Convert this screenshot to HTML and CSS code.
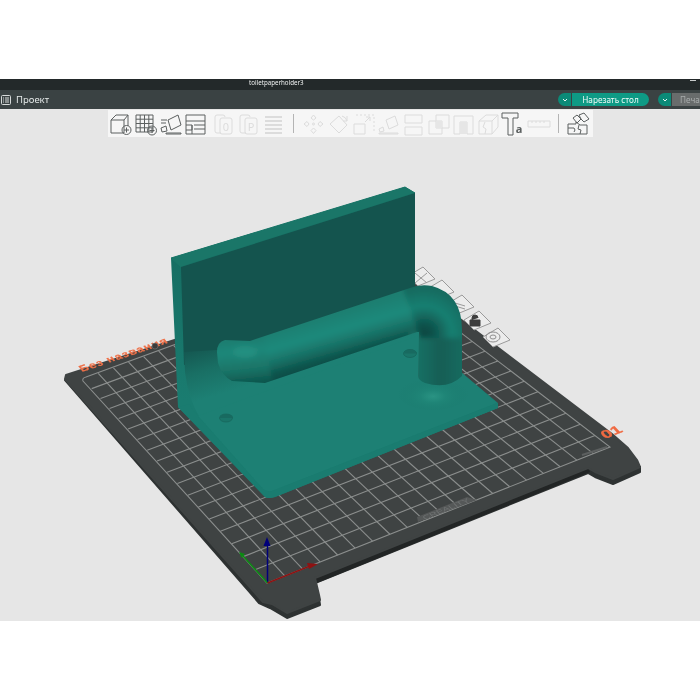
FILE: index.html
```html
<!DOCTYPE html>
<html lang="ru">
<head>
<meta charset="utf-8">
<title>toiletpaperholder3</title>
<link rel="stylesheet" href="styles.css">
</head>
<body>
<div class="page">
  <header class="titlebar"><span class="doc-title">toiletpaperholder3</span><span class="win-min"></span></header>
  <nav class="menubar">
    <svg class="menu-icon" viewBox="0 0 10 10"><rect x=".5" y=".5" width="9" height="9" rx="1"/><path d="M2 3h1M2 5h1M2 7h1M4 3h4M4 5h4M4 7h4"/></svg>
    <span class="menu-label">Проект</span>
    <div class="menu-actions">
      <div class="action slice"><span class="drop"><svg viewBox="0 0 6 4"><path d="M1 1l2 2 2-2"/></svg></span><span class="action-main">Нарезать стол</span></div>
      <div class="action print"><span class="drop"><svg viewBox="0 0 6 4"><path d="M1 1l2 2 2-2"/></svg></span><span class="action-main">Печать</span></div>
    </div>
  </nav>
  <main class="viewport">
    <svg class="scene" viewBox="0 109 700 512">
      <defs>
        <linearGradient id="gSide" gradientUnits="userSpaceOnUse" x1="0" y1="260" x2="0" y2="400"><stop offset="0" stop-color="#166e63"/><stop offset="1" stop-color="#1a7c70"/></linearGradient>
        <linearGradient id="gFillet" gradientUnits="userSpaceOnUse" x1="192" y1="345" x2="208" y2="398"><stop offset="0" stop-color="#14544e"/><stop offset=".5" stop-color="#196f64"/><stop offset="1" stop-color="#1d8074"/></linearGradient>
        <linearGradient id="gTube" gradientUnits="userSpaceOnUse" x1="324" y1="316" x2="336" y2="358"><stop offset="0" stop-color="#1a7e70"/><stop offset=".42" stop-color="#1f8a7c"/><stop offset=".75" stop-color="#176e63"/><stop offset="1" stop-color="#0b5048"/></linearGradient>
        <linearGradient id="gLeg" gradientUnits="userSpaceOnUse" x1="418" y1="0" x2="462" y2="0"><stop offset="0" stop-color="#1a7064"/><stop offset=".5" stop-color="#125e55"/><stop offset="1" stop-color="#136a5f"/></linearGradient>
        <radialGradient id="gElbow" gradientUnits="userSpaceOnUse" cx="424" cy="334" r="46"><stop offset="0" stop-color="#0a4640"/><stop offset=".22" stop-color="#0e534c"/><stop offset=".6" stop-color="#1a8072"/><stop offset="1" stop-color="#136a5f"/></radialGradient>
        <radialGradient id="gMound" cx=".5" cy=".62" r=".5"><stop offset="0" stop-color="#2a9383"/><stop offset=".35" stop-color="#1f8577"/><stop offset="1" stop-color="#1a7a6e" stop-opacity="0"/></radialGradient>
        <linearGradient id="gCap" gradientUnits="userSpaceOnUse" x1="235" y1="338" x2="240" y2="385"><stop offset="0" stop-color="#1a7b6e"/><stop offset=".3" stop-color="#20887a"/><stop offset=".7" stop-color="#197366"/><stop offset="1" stop-color="#0c544c"/></linearGradient>
        <clipPath id="tubeClip"><path d="M250 341L410 288Q420 284 432 286Q462 294 462 330L462 376Q448 390 425 383Q418 380 418 376L419 332L417 332L265 383L232 381Q222 376 218 363L217 352Q217 342 225 340Z"/></clipPath>
        <filter id="soft" filterUnits="userSpaceOnUse" x="190" y="250" width="310" height="170"><feGaussianBlur stdDeviation="2.500"/></filter>
      </defs>

      <path class="bed-side" d="M65 380L259 603L270 608L287 618L320 605L319 598L315 583L588 473L595 477L613 484L640 472L640 467L300 400Z"/>
      <path class="bed-slot" d="M315 578L588 468L590 472L317 583Z"/>
      <path class="bed-top" d="M66 375L394 269L612 434L628 448L637 460L640 467L613 479L595 472L588 468L315 578L319 595L320 600L287 613L272 604L263 602L65 379Z"/>
      <g id="grid" class="grid"></g>
      <path class="grid-edge" d="M86 377L379 270L610 447L267 583L83 381Q82 378 86 377Z"/>
      <path class="brand-tab" d="M417 517L467 497L477 500L418 522Z"/>
      <text class="brand" transform="matrix(.93 -.38 .5 .5 425 520)">CREALITY</text>
      <path class="corner-bar" d="M582 455L607 447"/>

      <text class="plate-name" transform="matrix(.95 -.32 .52 .66 82 372)">Без названия</text>
      <circle class="plate-dot" cx="155" cy="346" r="3"/>
      <text class="plate-no" transform="matrix(1.05 -.42 .55 .6 605 439)">01</text>

      <g class="badges">
        <path d="M408 276L423 267L435 279L418 286Z"/><path d="M415 273L427 283M427 273L415 283"/>
        <path d="M427 289L442 280L454 292L437 299Z"/>
        <path d="M447 304L462 295L474 307L457 314Z"/><path d="M455 303L465 306M455 306L465 309"/>
        <path d="M464 320L479 311L491 323L474 330Z"/>
        <path d="M483 337L498 328L510 340L493 347Z"/>
      </g>
      <path class="lock" d="M470 320h10v6h-10zM472 320v-2a3 3 0 0 1 6 0"/>
      <ellipse class="nut" cx="493" cy="337" rx="7" ry="5"/><ellipse class="nut" cx="493" cy="337" rx="3" ry="2"/>

      <path fill="url(#gSide)" class="m-round" d="M171 258L405 187L415 193L415 287L462 373L498 403L498 408L275 497Q268 499 265 497L178 407Z"/>
      <path class="m-top m-round" d="M171 258L405 187L415 193L181 267Z"/>
      <path class="m-wall" d="M181 267L415 193L415 300L184 365Z"/>
      <path fill="url(#gFillet)" d="M184 352L250 348L415 292L420 340L200 418Q188 398 185 372Z"/>
      <path class="m-base" d="M198 416L420 335L462 373L497 403L272 491Q267 492 263 489Z"/>
      <path class="m-edge" d="M263 489Q267 492 272 491L497 403L498 408L275 497Q268 499 265 497L178 407L190 404Q192 410 198 416Z"/>
      <ellipse fill="url(#gMound)" cx="433" cy="392" rx="36" ry="18"/>
      <ellipse class="m-dot" cx="226" cy="418" rx="6.500" ry="4"/>
      <path class="m-dot-hi" d="M220 418a6.500 4 0 0 1 13 0"/>
      <ellipse class="m-dot" cx="410" cy="353.500" rx="6.500" ry="4"/>
      <path class="m-dot-hi" d="M404 353.500a6.500 4 0 0 1 13 0"/>

      <g clip-path="url(#tubeClip)">
        <g filter="url(#soft)">
          <path fill="url(#gTube)" d="M250 325L412 270L425 345L265 400Z"/>
          <path fill="url(#gLeg)" d="M410 332L475 332L475 400L410 400Z"/>
          <path fill="url(#gElbow)" d="M400 280L424 270L480 280L480 338L420 338Z"/>
          <path fill="url(#gCap)" d="M262 325L205 325L205 395L275 395L268 360Z"/>
          <ellipse class="cap-hi" cx="245" cy="352" rx="12" ry="6"/>
        </g>
      </g>

      <g class="axes">
        <path class="ax-b" d="M267.500 583V544"/><path class="ax-bh" d="M267 537L270.500 546H263.500Z"/>
        <path class="ax-g" d="M267.500 583L243 556"/><path class="ax-gh" d="M239 552L245 554L241.500 558Z"/>
        <path class="ax-r" d="M267.500 583L310 566"/><path class="ax-rh" d="M318 564L309 569L307 563Z"/>
      </g>
    </svg>

    <div class="toolbar">
      <svg class="ti on" viewBox="0 0 25 24"><path d="M3 8h13v13H3zM3 8l5-5h12v11M16 8l4-5"/><circle cx="18.500" cy="18" r="4.500"/><path d="M16 18h5M18.500 15.500v5"/></svg>
      <svg class="ti on" viewBox="0 0 25 24"><path d="M3 3h17v17H3zM3 7.200h17M3 11.500h17M3 15.800h17M7.200 3v17M11.500 3v17M15.800 3v17"/><circle cx="19" cy="18.500" r="4.500"/><path d="M16.500 18.500h5M19 16v5"/></svg>
      <svg class="ti on" viewBox="0 0 25 24"><path d="M10 8l10-5 3 10-10 5zM3 8h6M3 11h5M8 21h15v1H8zM3 16l5-2 1 5-5 1z"/></svg>
      <svg class="ti on" viewBox="0 0 25 24"><path d="M3 3h19v19H3zM3 9h19M3 13h6v5H3M11 13h11M11 17h11M9 13v9"/></svg>
      <svg class="ti off g2" viewBox="0 0 25 24"><path d="M10 21H6q-2 0-2-2V5q0-2 2-2h6q2 0 2 2"/><rect x="9" y="6" width="12" height="16" rx="2"/><text class="ti-t" x="15" y="19">0</text></svg>
      <svg class="ti off" viewBox="0 0 25 24"><path d="M10 21H6q-2 0-2-2V5q0-2 2-2h6q2 0 2 2"/><rect x="9" y="6" width="12" height="16" rx="2"/><text class="ti-t" x="15" y="19">P</text></svg>
      <svg class="ti off fat" viewBox="0 0 25 24"><path d="M4 5h17M4 9h17M4 13h17M4 17h17M4 21h17"/></svg>
      <span class="sep"></span>
      <svg class="ti off" viewBox="0 0 25 24"><path d="M12.500 3l2.500 3-2.500 2-2.500-2zM12.500 16l2.500 2.500-2.500 3-2.500-3zM3 12l3-2.500 2 2.500-2 2.500zM17 12l2-2.500 3 2.500-3 2.500z"/><circle cx="12.500" cy="12" r="1"/></svg>
      <svg class="ti off" viewBox="0 0 25 24"><path d="M13 4l8 9-8 8-9-9zM16 4q4 1 5 5M21 4v5h-4"/></svg>
      <svg class="ti off dash" viewBox="0 0 25 24"><path d="M5 3h18v18M16 21"/><path class="solid" d="M3 12h11v10H3zM14 10l5-5M15 5h4v4"/></svg>
      <svg class="ti off" viewBox="0 0 25 24"><path d="M10 8l9-4 3 9-9 4zM3 22h19v-1H3zM3 17l4-2 1 4-4 1z"/></svg>
      <svg class="ti off" viewBox="0 0 25 24"><path d="M4 3h17v8H4zM4 15h17v8H4z"/></svg>
      <svg class="ti off" viewBox="0 0 25 24"><path d="M10 3h13v13H10zM3 9h13v13H3z"/><path class="tint" d="M10 9h6v7h-6z"/></svg>
      <svg class="ti off" viewBox="0 0 25 24"><path d="M3 4h19v18h-6V10H9v12H3z"/><path class="tint" d="M9 10h7v12H9z"/></svg>
      <svg class="ti off" viewBox="0 0 25 24"><path d="M3 9h13v13H3zM3 9l7-6h12v12l-6 7M16 9l6-6M9 10l-2 5 3 2-1 5"/></svg>
      <svg class="ti on t-icon" viewBox="0 0 25 24"><path d="M1 1h16v5h-5v17H7V6H1z"/><text class="ti-a" x="18" y="21">a</text></svg>
      <svg class="ti off" viewBox="0 0 25 24"><path d="M2 9h22v6H2zM6 9v2M10 9v2M14 9v2M18 9v2"/></svg>
      <span class="sep last"></span>
      <svg class="ti on" viewBox="0 0 25 24"><path d="M3 12h8v-2l4 3h7v9H3zM3 16h6q2 2 0 4M14 13l-1 4 3 1-1 4M14 3l5-2 5 6-5 3-3-3zM8 6l4-3 4 4-4 4z"/></svg>
    </div>
  </main>
</div>
<script src="grid.js"></script>
</body>
</html>
```
FILE: styles.css
```css
* { box-sizing: border-box; }
html, body { margin: 0; background: #fff; }
.page { width: 700px; height: 700px; padding: 79px 0; display: flex; flex-direction: column; overflow: hidden; font-family: "Noto Sans", "Open Sans", sans-serif; filter: blur(.4px); }

.titlebar { flex: 0 0 11px; background: #23292a; display: flex; justify-content: flex-end; align-items: flex-start; position: relative; overflow: hidden; }
.doc-title { position: absolute; left: 249px; top: 0; font-size: 6.200px; line-height: 7px; color: #eef0f0; }
.win-min { width: 6px; height: 1px; margin: 1px 4px 0 0; background: #c8cccc; }

.menubar { flex: 0 0 19px; background: #3a4243; display: flex; align-items: center; padding-left: 1px; overflow: hidden; }
.menu-icon { width: 10px; height: 10px; margin-right: 5px; fill: none; stroke: #d6dada; stroke-width: 1; }
.menu-label { font-size: 9.500px; color: #e4e8e8; }
.menu-actions { margin-left: auto; display: flex; gap: 9px; width: 142px; flex: none; margin-right: 0; }
.action { height: 13px; display: flex; flex: none; }
.drop { width: 13px; border-radius: 7px 0 0 7px; background: #0b8a78; display: flex; align-items: center; justify-content: center; }
.drop svg { width: 6px; height: 4px; fill: none; stroke: #e6f4f2; stroke-width: 1; }
.action-main { display: flex; align-items: center; justify-content: center; font-size: 8.200px; margin-left: 1px; }
.slice .action-main { width: 77px; background: #0e9a85; color: #eefaf8; border-radius: 0 7px 7px 0; }
.print { margin-right: -30px; }
.print .action-main { width: 50px; background: #686c6c; color: #a8acac; justify-content: flex-start; padding-left: 8px; }

.viewport { flex: 1; position: relative; background: #e6e6e6; display: flex; flex-direction: column; align-items: center; padding-top: 1px; overflow: hidden; }
.scene { position: absolute; left: 0; top: 0; width: 700px; height: 512px; display: block; }

.toolbar { position: relative; width: 485px; height: 27px; background: #f6f6f6; display: flex; align-items: center; padding-left: .5px; }
.ti { width: 25px; height: 24px; flex: none; fill: none; stroke-width: 1; }
.ti.on { stroke: #5c6060; }
.ti.off { stroke: #dcdcdc; }
.ti.g2 { margin-left: 3px; }
.ti.fat { stroke-width: 2.200; }
.ti.dash { stroke-dasharray: 2 2; }
.ti .solid { stroke-dasharray: none; }
.ti .tint { fill: #e6e6e6; stroke: none; }
.ti-t { font-family: "Noto Sans", sans-serif; font-size: 11px; text-anchor: middle; fill: #dcdcdc; stroke: none; }
.ti-a { font-family: "Noto Sans", sans-serif; font-weight: 700; font-size: 11px; text-anchor: middle; fill: #5c6060; stroke: none; }
.sep { flex: none; width: 1px; height: 19px; margin: 0 7px; background: #b4b4b4; }
.sep.last { margin-right: 6px; }

.bed-side { fill: #2e3232; stroke: #2e3232; stroke-linejoin: round; stroke-width: 2; }
.bed-slot { fill: #222525; }
.bed-top { fill: #3f4343; stroke: #3f4343; stroke-width: 2; stroke-linejoin: round; }
.grid line { stroke: #8b8e8d; stroke-width: 1.100; }
.grid-edge { fill: none; stroke: #8b8e8d; stroke-width: 1.100; }
.brand-tab { fill: #555858; }
.brand { font-family: "Liberation Sans", sans-serif; font-size: 10px; fill: #6f7272; }
.corner-bar { stroke: #5d6060; stroke-width: 2; }
.plate-name { font-family: "Liberation Sans", sans-serif; font-weight: 700; font-size: 12px; letter-spacing: 1px; fill: #ee7048; stroke: #ee7048; stroke-width: .25; }
.plate-dot { fill: #3c3c3c; stroke: #777; stroke-width: .6; }
.plate-no { font-family: "Liberation Sans", sans-serif; font-weight: 700; font-size: 16px; fill: #f06a42; stroke: #f06a42; stroke-width: .4; }

.badges path { fill: #ececec; stroke: #9a9a9a; stroke-width: 1; stroke-linejoin: round; }
.lock { fill: #3d3d3d; stroke: #3d3d3d; stroke-width: 1; }
.nut { fill: none; stroke: #8e8e8e; stroke-width: 1; }

.m-round { stroke-linejoin: round; }
.m-top { fill: #1a7668; stroke: #1a7668; stroke-width: 1; }
.m-wall { fill: #14544e; }
.m-base { fill: #1d8074; }
.m-edge { fill: #1a7c70; }
.m-dot { fill: #1a7569; stroke: #155f55; stroke-width: .6; }
.m-dot-hi { fill: #186a60; }
.cap-hi { fill: #238f80; }

.axes path { fill: none; stroke-width: 1.500; }
.axes .ax-b { stroke: #00007a; }
.axes .ax-g { stroke: #0b8a12; }
.axes .ax-r { stroke: #8e1212; }
.axes .ax-bh { fill: #00007a; stroke: none; }
.axes .ax-gh { fill: #0b8a12; stroke: none; }
.axes .ax-rh { fill: #8e1212; stroke: none; }
```
FILE: grid.js
```js
(function () {
  var NS = "http://www.w3.org/2000/svg";
  var host = document.getElementById("grid");
  var q = [[83, 379], [267, 583], [610, 447], [379, 270]];
  var COLS = 20, ROWS = 18;
  var x0 = q[0][0], y0 = q[0][1], x1 = q[1][0], y1 = q[1][1];
  var x2 = q[2][0], y2 = q[2][1], x3 = q[3][0], y3 = q[3][1];
  var dx1 = x1 - x2, dx2 = x3 - x2, dx3 = x0 - x1 + x2 - x3;
  var dy1 = y1 - y2, dy2 = y3 - y2, dy3 = y0 - y1 + y2 - y3;
  var den = dx1 * dy2 - dx2 * dy1;
  var g = (dx3 * dy2 - dx2 * dy3) / den, h = (dx1 * dy3 - dx3 * dy1) / den;
  var a = x1 - x0 + g * x1, b = x3 - x0 + h * x3;
  var d = y1 - y0 + g * y1, e = y3 - y0 + h * y3;
  function map(u, v) {
    var w = g * u + h * v + 1;
    return [(a * u + b * v + x0) / w, (d * u + e * v + y0) / w];
  }
  function seg(p, r) {
    var l = document.createElementNS(NS, "line");
    l.setAttribute("x1", p[0]); l.setAttribute("y1", p[1]);
    l.setAttribute("x2", r[0]); l.setAttribute("y2", r[1]);
    host.appendChild(l);
  }
  var i;
  for (i = 1; i < ROWS; i++) seg(map(i / ROWS, 0), map(i / ROWS, 1));
  for (i = 1; i < COLS; i++) seg(map(0, i / COLS), map(1, i / COLS));
})();
```
